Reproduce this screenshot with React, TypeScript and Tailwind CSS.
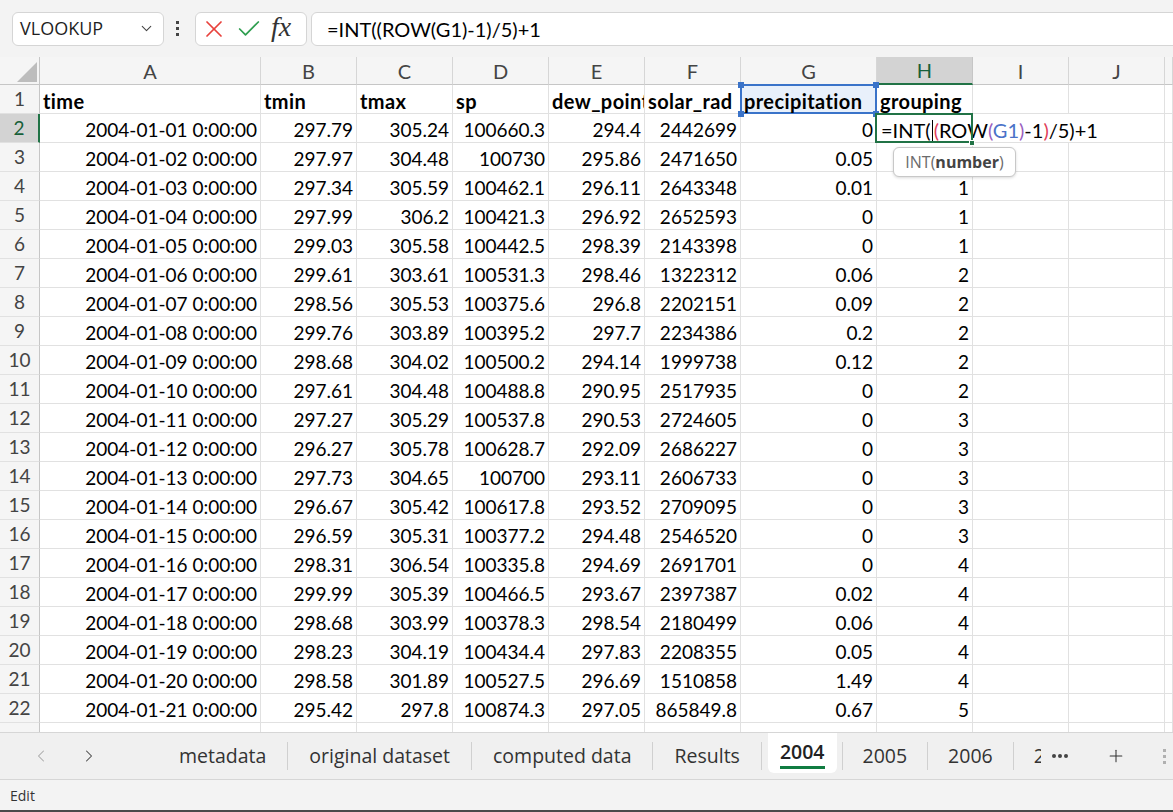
import React from 'react';
import { ChevronDown, ChevronLeft, ChevronRight, X, Check, Plus } from 'lucide-react';

type Row = [string, string, string, string, string, string, string, string];

const rows: Row[] = [
    ['2004-01-01 0:00:00', '297.79', '305.24', '100660.3', '294.4', '2442699', '0', ''],
    ['2004-01-02 0:00:00', '297.97', '304.48', '100730', '295.86', '2471650', '0.05', ''],
    ['2004-01-03 0:00:00', '297.34', '305.59', '100462.1', '296.11', '2643348', '0.01', '1'],
    ['2004-01-04 0:00:00', '297.99', '306.2', '100421.3', '296.92', '2652593', '0', '1'],
    ['2004-01-05 0:00:00', '299.03', '305.58', '100442.5', '298.39', '2143398', '0', '1'],
    ['2004-01-06 0:00:00', '299.61', '303.61', '100531.3', '298.46', '1322312', '0.06', '2'],
    ['2004-01-07 0:00:00', '298.56', '305.53', '100375.6', '296.8', '2202151', '0.09', '2'],
    ['2004-01-08 0:00:00', '299.76', '303.89', '100395.2', '297.7', '2234386', '0.2', '2'],
    ['2004-01-09 0:00:00', '298.68', '304.02', '100500.2', '294.14', '1999738', '0.12', '2'],
    ['2004-01-10 0:00:00', '297.61', '304.48', '100488.8', '290.95', '2517935', '0', '2'],
    ['2004-01-11 0:00:00', '297.27', '305.29', '100537.8', '290.53', '2724605', '0', '3'],
    ['2004-01-12 0:00:00', '296.27', '305.78', '100628.7', '292.09', '2686227', '0', '3'],
    ['2004-01-13 0:00:00', '297.73', '304.65', '100700', '293.11', '2606733', '0', '3'],
    ['2004-01-14 0:00:00', '296.67', '305.42', '100617.8', '293.52', '2709095', '0', '3'],
    ['2004-01-15 0:00:00', '296.59', '305.31', '100377.2', '294.48', '2546520', '0', '3'],
    ['2004-01-16 0:00:00', '298.31', '306.54', '100335.8', '294.69', '2691701', '0', '4'],
    ['2004-01-17 0:00:00', '299.99', '305.39', '100466.5', '293.67', '2397387', '0.02', '4'],
    ['2004-01-18 0:00:00', '298.68', '303.99', '100378.3', '298.54', '2180499', '0.06', '4'],
    ['2004-01-19 0:00:00', '298.23', '304.19', '100434.4', '297.83', '2208355', '0.05', '4'],
    ['2004-01-20 0:00:00', '298.58', '301.89', '100527.5', '296.69', '1510858', '1.49', '4'],
    ['2004-01-21 0:00:00', '295.42', '297.8', '100874.3', '297.05', '865849.8', '0.67', '5'],
];

const headers = ['time', 'tmin', 'tmax', 'sp', 'dew_point', 'solar_rad', 'precipitation', 'grouping'];
const letters = ['A', 'B', 'C', 'D', 'E', 'F', 'G', 'H', 'I', 'J', ''];

const cellBase = 'h-[29px] border-r border-b border-[#e1e1e1] flex items-end pb-[1px] px-[3px] overflow-hidden whitespace-nowrap text-[19px] leading-[22px] text-black';
const headBold = 'font-bold text-[20px] tracking-[0.4px]';

const Dots = ({ color }: { color: string }) => (
    <div className="flex flex-col gap-[3px]">
        <div className={`w-[3px] h-[3px] ${color}`} />
        <div className={`w-[3px] h-[3px] ${color}`} />
        <div className={`w-[3px] h-[3px] ${color}`} />
    </div>
);

const Handle = ({ pos }: { pos: string }) => (
    <div className={`absolute w-[6px] h-[6px] bg-[#3a73c9] ${pos}`} />
);

const FormulaText = () => (
    <span className="text-[20px]">
        =INT(
        <span className="inline-block w-px h-[21px] bg-black align-[-3px] mx-[1px]" />
        <span className="text-[#e0405a]">(</span>
        ROW
        <span className="text-[#9a5fc0]">(</span>
        <span className="text-[#4a72c8]">G1</span>
        <span className="text-[#9a5fc0]">)</span>
        -1
        <span className="text-[#e0405a]">)</span>
        /5)+1
    </span>
);

const Sep = () => <div className="w-px h-[28px] self-center shrink-0 bg-[#d0d0d0]" />;

export default function App() {
    return (
        <div className="w-[1173px] h-[812px] overflow-hidden bg-white flex flex-col font-['Lato',sans-serif] border-b-2 border-[#4a4a4a]">
            {/* formula bar */}
            <div className="h-[57px] shrink-0 bg-[#f3f3f3] flex items-center pl-[12px] overflow-hidden">
                <div className="w-[152px] h-[34px] shrink-0 bg-white border border-[#d5d5d5] rounded-[6px] flex items-center justify-between pl-[7px] pr-[8px] font-['Open_Sans',sans-serif] text-[18px] text-[#1f1f1f]">
                    <span>VLOOKUP</span>
                    <ChevronDown size={17} strokeWidth={1.5} color="#444" />
                </div>
                <div className="ml-[12px] mr-[16px]">
                    <Dots color="bg-[#444]" />
                </div>
                <div className="w-[112px] h-[34px] shrink-0 bg-white border border-[#d5d5d5] rounded-[6px] flex items-center pl-[4px]">
                    <X size={28} strokeWidth={1.5} color="#e8413c" />
                    <Check size={28} strokeWidth={1.5} color="#2e9e4f" className="ml-[7px]" />
                    <span className="ml-[8px] font-['Liberation_Serif',serif] italic text-[28px] leading-none text-[#333] -mt-[4px]">fx</span>
                </div>
                <div className="ml-[4px] w-[900px] h-[34px] shrink-0 bg-white border border-[#d5d5d5] rounded-[6px] flex items-center pl-[15px] text-[20px] text-black">
                    =INT((ROW(G1)-1)/5)+1
                </div>
            </div>

            {/* grid */}
            <div className="relative h-[675px] shrink-0 overflow-hidden">
                <div className="grid grid-cols-[40px_221px_96px_96px_96px_96px_96px_136px_96px_96px_96px_1fr]">
                    {/* column header row */}
                    <div className="h-[28px] bg-[#f5f5f5] border-r border-b border-[#c6c6c6] relative">
                        <svg className="absolute left-[17px] top-[5px]" width="20" height="20" viewBox="0 0 20 20">
                            <polygon points="20,0 20,20 0,20" fill="#bdbdbd" />
                        </svg>
                    </div>
                    {letters.map((l, i) =>
                        l === 'H' ? (
                            <div key={i} className="h-[28px] bg-[#d3d3d3] border-r border-[#c6c6c6] border-b-2 border-b-[#217346] flex items-center justify-center text-[20px] text-[#17603a]">
                                {l}
                            </div>
                        ) : (
                            <div key={i} className="h-[28px] bg-[#f5f5f5] border-r border-[#d6d6d6] border-b border-b-[#c6c6c6] flex items-center justify-center text-[20px] text-[#444]">
                                {l}
                            </div>
                        )
                    )}

                    {/* row 1 */}
                    <div className="h-[29px] bg-[#f5f5f5] border-r border-[#c6c6c6] border-b border-b-[#e1e1e1] flex items-center justify-center text-[19px] text-[#444]">1</div>
                    {headers.map((h, i) =>
                        i === 6 ? (
                            <div key={i} className={`${cellBase} ${headBold} relative bg-[#e8f0fb] overflow-visible`}>
                                <div className="absolute inset-x-[-1px] top-[-1px] bottom-[-1px] border-2 border-[#3a73c9]" />
                                <Handle pos="left-[-3px] top-[-3px]" />
                                <Handle pos="right-[-3px] top-[-3px]" />
                                <Handle pos="left-[-3px] bottom-[-4px]" />
                                <Handle pos="right-[-3px] bottom-[-4px]" />
                                <span className="relative">{h}</span>
                            </div>
                        ) : (
                            <div key={i} className={`${cellBase} ${headBold}`}>{h}</div>
                        )
                    )}
                    <div className={cellBase} />
                    <div className={cellBase} />
                    <div className={cellBase} />

                    {rows.map((r, ri) => {
                        const n = ri + 2;
                        const sel = n === 2;
                        return (
                            <React.Fragment key={n}>
                                <div className={sel
                                    ? 'h-[29px] bg-[#d3d3d3] border-r-2 border-[#217346] border-b border-b-[#e1e1e1] flex items-center justify-center text-[19px] text-[#17603a]'
                                    : 'h-[29px] bg-[#f5f5f5] border-r border-[#c6c6c6] border-b border-b-[#e1e1e1] flex items-center justify-center text-[19px] text-[#444]'}>
                                    {n}
                                </div>
                                {r.map((v, ci) =>
                                    sel && ci === 7 ? (
                                        <div key={ci} className={`${cellBase} relative overflow-visible`}>
                                            <div className="absolute left-0 top-0 h-[28px] z-10 bg-white flex items-end pb-[1px] pl-[4px] pr-[2px] whitespace-nowrap">
                                                <FormulaText />
                                            </div>
                                            <div className="absolute left-[-2px] right-[-1px] top-[-1px] bottom-[-1px] border-2 border-[#217346] z-20" />
                                            <div className="absolute right-[-3px] bottom-[-4px] w-[6px] h-[6px] bg-[#217346] border border-white z-30" />
                                        </div>
                                    ) : (
                                        <div key={ci} className={`${cellBase} justify-end`}>{v}</div>
                                    )
                                )}
                                <div className={cellBase} />
                                <div className={cellBase} />
                                <div className={cellBase} />
                            </React.Fragment>
                        );
                    })}

                    {/* partial row 23 */}
                    <div className="h-[29px] bg-[#f5f5f5] border-r border-[#c6c6c6]" />
                    {letters.map((_, i) => (
                        <div key={i} className={cellBase} />
                    ))}
                </div>

                {/* function tooltip */}
                <div className="absolute left-[893px] top-[90px] w-[123px] h-[30px] z-40 bg-white border border-[#c8c8c8] rounded-[6px] shadow-[0_1px_3px_rgba(0,0,0,0.15)] flex items-center justify-center font-['Open_Sans',sans-serif] text-[16px] text-[#6b6b6b]">
                    INT(<span className="font-bold text-[#444]">number</span>)
                </div>
            </div>

            {/* sheet tabs */}
            <div className="h-[47px] shrink-0 bg-[#f0f0f0] border-t border-[#d6d6d6] flex font-['Open_Sans',sans-serif] text-[19.5px] text-[#333]">
                <div className="w-[158px] shrink-0 flex items-center">
                    <ChevronLeft size={20} strokeWidth={1.25} color="#a8a8a8" className="ml-[31px]" />
                    <ChevronRight size={20} strokeWidth={1.25} color="#444" className="ml-[28px]" />
                </div>
                <div className="w-[883px] shrink-0 flex overflow-hidden">
                    <div className="px-[21px] flex items-center">metadata</div>
                    <Sep />
                    <div className="px-[21px] flex items-center whitespace-nowrap">original dataset</div>
                    <Sep />
                    <div className="px-[21px] flex items-center whitespace-nowrap">computed data</div>
                    <Sep />
                    <div className="px-[21px] flex items-center">Results</div>
                    <Sep />
                    <div className="ml-[6px] mr-[5px] -mt-px mb-[6px] px-[12px] bg-white rounded-b-[6px] flex flex-col items-center justify-center">
                        <span className="font-semibold text-[#222] leading-[24px] mt-[4px]">2004</span>
                        <div className="w-full h-[3px] bg-[#107c41] mt-[2px]" />
                    </div>
                    <Sep />
                    <div className="px-[20px] flex items-center">2005</div>
                    <Sep />
                    <div className="px-[20px] flex items-center">2006</div>
                    <Sep />
                    <div className="px-[20px] flex items-center">2007</div>
                </div>
                <div className="flex items-center">
                    <div className="ml-[11px] flex gap-[2px]">
                        <div className="w-[4px] h-[4px] rounded-full bg-[#444]" />
                        <div className="w-[4px] h-[4px] rounded-full bg-[#444]" />
                        <div className="w-[4px] h-[4px] rounded-full bg-[#444]" />
                    </div>
                    <Plus size={20} strokeWidth={1.25} color="#333" className="ml-[38px]" />
                    <div className="ml-[37px]">
                        <Dots color="bg-[#b0b0b0]" />
                    </div>
                </div>
            </div>

            {/* status bar */}
            <div className="flex-1 bg-[#f3f3f3] border-t border-[#d6d6d6] flex items-center pl-[10px] font-['Open_Sans',sans-serif] text-[14px] text-[#333]">
                Edit
            </div>
        </div>
    );
}
